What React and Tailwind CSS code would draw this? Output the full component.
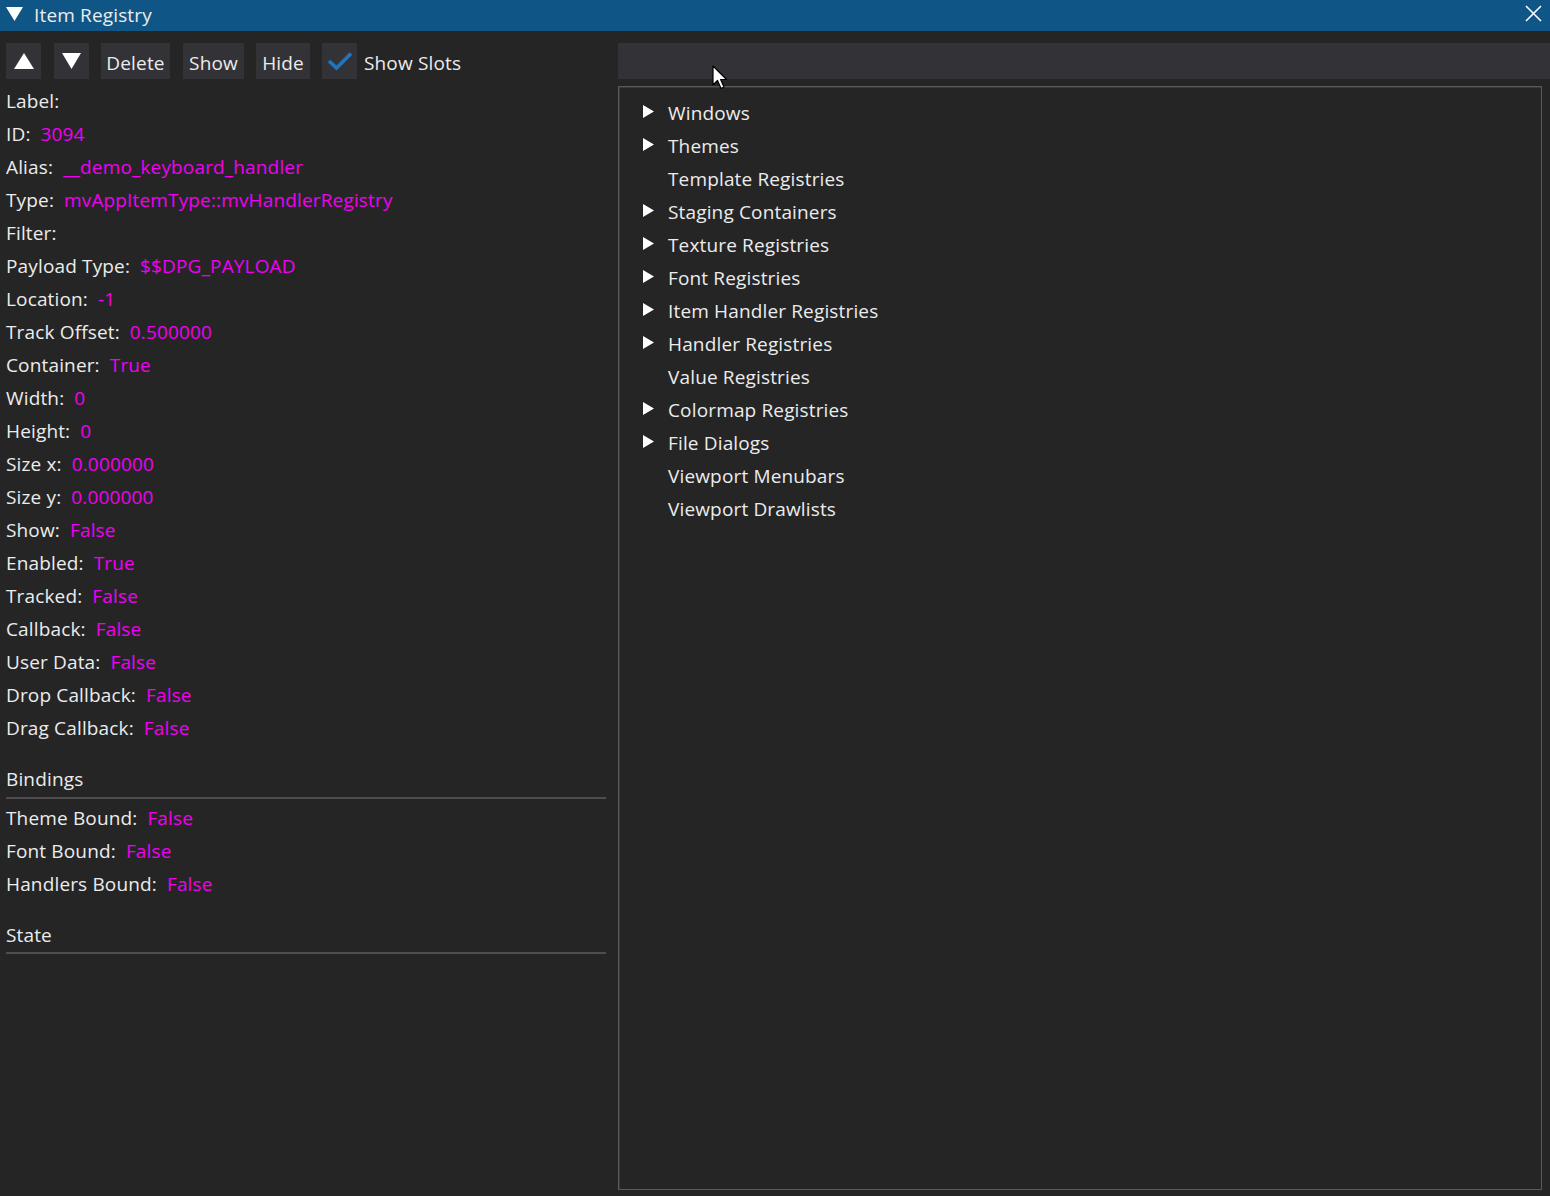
import React from "react";

const props = [
  ["Label:", ""],
  ["ID:", "3094"],
  ["Alias:", "__demo_keyboard_handler"],
  ["Type:", "mvAppItemType::mvHandlerRegistry"],
  ["Filter:", ""],
  ["Payload Type:", "$$DPG_PAYLOAD"],
  ["Location:", "-1"],
  ["Track Offset:", "0.500000"],
  ["Container:", "True"],
  ["Width:", "0"],
  ["Height:", "0"],
  ["Size x:", "0.000000"],
  ["Size y:", "0.000000"],
  ["Show:", "False"],
  ["Enabled:", "True"],
  ["Tracked:", "False"],
  ["Callback:", "False"],
  ["User Data:", "False"],
  ["Drop Callback:", "False"],
  ["Drag Callback:", "False"],
];

const bindings = [
  ["Theme Bound:", "False"],
  ["Font Bound:", "False"],
  ["Handlers Bound:", "False"],
];

const tree = [
  ["Windows", true],
  ["Themes", true],
  ["Template Registries", false],
  ["Staging Containers", true],
  ["Texture Registries", true],
  ["Font Registries", true],
  ["Item Handler Registries", true],
  ["Handler Registries", true],
  ["Value Registries", false],
  ["Colormap Registries", true],
  ["File Dialogs", true],
  ["Viewport Menubars", false],
  ["Viewport Drawlists", false],
];

function Row({ label, value }) {
  return (
    <div className="h-[33px] flex items-center whitespace-nowrap">
      <span className="text-[#ececec]">{label}</span>
      {value !== "" && <span className="ml-[10px] text-[#f000f0]">{value}</span>}
    </div>
  );
}

function Btn({ children, className }) {
  return (
    <div className={"h-[36px] bg-[#333337] flex items-center justify-center text-[#ececec] " + (className || "")}>
      {children}
    </div>
  );
}

export default function App() {
  return (
    <div
      className="w-[1550px] h-[1196px] bg-[#252526] flex flex-col overflow-hidden relative text-[19px] leading-none tracking-[0.15px]"
      style={{ fontFamily: '"Open Sans", "Noto Sans", sans-serif' }}
    >
      {/* Title bar */}
      <div className="h-[31px] shrink-0 bg-[#0f5687] flex items-center pl-[6px] pr-[8px]">
        <svg width="17" height="14" viewBox="0 0 17 14" className="shrink-0 mt-[-4px]">
          <polygon points="0,0 17,0 8.5,14" fill="#ffffff" />
        </svg>
        <span className="ml-[11px] text-[#ececec]">Item Registry</span>
        <div className="flex-1" />
        <svg width="17" height="17" viewBox="0 0 17 17" className="shrink-0 mt-[-4px]">
          <path d="M1 1 L16 16 M16 1 L1 16" stroke="#ffffff" strokeWidth="1.6" />
        </svg>
      </div>

      {/* Body */}
      <div className="flex flex-1 pl-[6px] pt-[12px] gap-[12px] min-h-0">
        {/* Left pane */}
        <div className="w-[600px] shrink-0 flex flex-col">
          <div className="h-[36px] flex items-center">
            <Btn className="w-[35px]">
              <svg width="20" height="16" viewBox="0 0 20 16">
                <polygon points="10,0 20,16 0,16" fill="#ffffff" />
              </svg>
            </Btn>
            <Btn className="w-[35px] ml-[13px]">
              <svg width="19" height="16" viewBox="0 0 19 16">
                <polygon points="0,0 19,0 9.5,16" fill="#ffffff" />
              </svg>
            </Btn>
            <Btn className="w-[69px] ml-[12px] pt-[4px]">Delete</Btn>
            <Btn className="w-[61px] ml-[13px] pt-[4px]">Show</Btn>
            <Btn className="w-[54px] ml-[12px] pt-[4px]">Hide</Btn>
            <Btn className="w-[35px] ml-[12px]">
              <svg width="26" height="20" viewBox="0 0 26 20">
                <path d="M2 10 L9.5 17 L24 2.5" stroke="#1f76bf" strokeWidth="3.6" fill="none" strokeLinejoin="miter" />
              </svg>
            </Btn>
            <span className="ml-[7px] pt-[4px] text-[#ececec]">Show Slots</span>
          </div>

          <div className="mt-[6px] flex flex-col">
            {props.map(([l, v]) => (
              <Row key={l} label={l} value={v} />
            ))}
          </div>

          <div className="mt-[18px] h-[33px] flex items-center text-[#ececec]">Bindings</div>
          <div className="mt-[1px] h-[2px] bg-[#4e4e4e]" />
          <div className="mt-[3px] flex flex-col">
            {bindings.map(([l, v]) => (
              <Row key={l} label={l} value={v} />
            ))}
          </div>

          <div className="mt-[18px] h-[33px] flex items-center text-[#ececec]">State</div>
          <div className="mt-[0px] h-[2px] bg-[#4e4e4e]" />
        </div>

        {/* Right pane */}
        <div className="flex-1 flex flex-col min-w-0">
          <div className="h-[36px] shrink-0 bg-[#333337]" />
          <div className="mt-[7px] mb-[6px] mr-[8px] flex-1 border border-[#5a5a5a] shadow-[inset_1px_1px_0_#3a3a3a] pt-[10px] pl-[24px] flex flex-col">
            {tree.map(([t, arrow]) => (
              <div key={t} className="h-[33px] flex items-center whitespace-nowrap">
                <div className="w-[25px] shrink-0 flex items-center">
                  {arrow && (
                    <svg width="11" height="13" viewBox="0 0 11 13" className="mt-[-5px]">
                      <polygon points="0,0 11,6.5 0,13" fill="#ffffff" />
                    </svg>
                  )}
                </div>
                <span className="text-[#ececec]">{t}</span>
              </div>
            ))}
          </div>
        </div>
      </div>

      {/* Mouse cursor */}
      <svg
        className="absolute left-[712px] top-[65px]"
        width="16"
        height="26"
        viewBox="0 0 16 26"
      >
        <path
          d="M1 1 L1 20 L5.5 15.5 L9 23.5 L12 22 L8.6 14.5 L14.5 14.5 Z"
          fill="#ffffff"
          stroke="#000000"
          strokeWidth="1.2"
          strokeLinejoin="round"
        />
      </svg>
    </div>
  );
}
